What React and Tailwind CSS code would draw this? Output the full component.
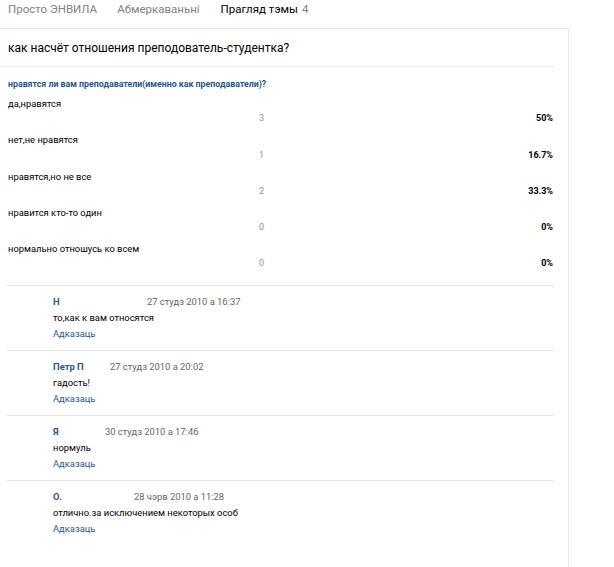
const OPTIONS = [
  { label: 'да,нравятся', count: 3, percent: '50%' },
  { label: 'нет,не нравятся', count: 1, percent: '16.7%' },
  { label: 'нравятся,но не все', count: 2, percent: '33.3%' },
  { label: 'нравится кто-то один', count: 0, percent: '0%' },
  { label: 'нормально отношусь ко всем', count: 0, percent: '0%' },
]

const COMMENTS = [
  { name: 'Н', nameWidth: 'w-[94px]', date: '27 студз 2010 а 16:37', text: 'то,как к вам относятся' },
  { name: 'Петр П', nameWidth: 'w-[57px]', date: '27 студз 2010 а 20:02', text: 'гадость!' },
  { name: 'Я', nameWidth: 'w-[52px]', date: '30 студз 2010 а 17:46', text: 'нормуль' },
  { name: 'О.', nameWidth: 'w-[81px]', date: '28 чэрв 2010 а 11:28', text: 'отлично.за исключением некоторых особ' },
]

export default function App() {
  return (
    <div className="w-[614px] h-[567px] bg-white overflow-hidden font-['Roboto','Liberation_Sans',sans-serif] text-[#000]">
      {/* Tabs */}
      <div className="w-[569px] h-[29px] flex items-center gap-[20px] pl-[8px] pb-[8px] text-[11.5px] border-b border-[#e7e8ec]">
        <span className="text-[#828282]">Просто ЭНВИЛА</span>
        <span className="text-[#828282] mr-[1px]">Абмеркаваньні</span>
        <span className="text-[#000]">
          Прагляд тэмы <span className="text-[#828282] ml-[1px]">4</span>
        </span>
      </div>

      <div className="w-[569px] h-[538px] border-r border-[#e7e8ec]">
        {/* Title */}
        <div className="h-[37px] flex items-center pl-[8px] text-[12px]">
          как насчёт отношения преподователь-студентка?
        </div>
        <div className="w-[554px] border-b border-[#eceef1]" />

        {/* Poll */}
        <div className="pl-[8px] pr-[15px] pt-[10px]">
          <div className="h-[14px] leading-[14px] text-[8.8px] font-bold text-[#2a5885]">
            нравятся ли вам преподаватели(именно как преподаватели)?
          </div>
          <div className="pt-[6px]">
            {OPTIONS.map((o, i) => (
              <div key={i} className="h-[36.25px]">
                <div className="h-[14px] leading-[14px] text-[9.4px]">{o.label}</div>
                <div className="h-[16px] flex items-center text-[9px]">
                  <span className="ml-[251px] text-[#939393]">{o.count}</span>
                  <span className="ml-auto font-bold">{o.percent}</span>
                </div>
              </div>
            ))}
          </div>
        </div>

        {/* Comments */}
        <div className="ml-[7px] w-[547px] mt-[7px]">
          {COMMENTS.map((c, i) => (
            <div key={i} className="border-t border-[#e7e8ec] pl-[46px] pt-[8px] pb-[8px]">
              <div className="h-[16px] flex items-center text-[9.4px]">
                <span className={`${c.nameWidth} font-bold text-[#2a5885]`}>{c.name}</span>
                <span className="text-[#656565]">{c.date}</span>
              </div>
              <div className="h-[16px] flex items-center text-[9.4px]">{c.text}</div>
              <div className="h-[16px] flex items-center text-[9.4px] text-[#2a5885]">Адказаць</div>
            </div>
          ))}
        </div>
      </div>
    </div>
  )
}
